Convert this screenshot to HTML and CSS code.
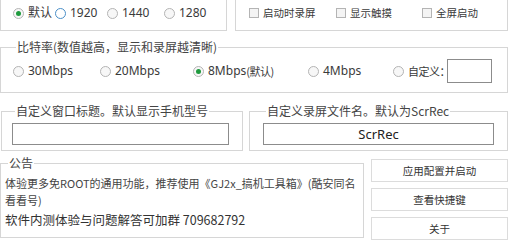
FILE: index.html
```html
<!DOCTYPE html>
<html lang="zh">
<head>
<meta charset="utf-8">
<link rel="stylesheet" href="styles.css">
</head>
<body>
<div class="page">
  <div class="row top">
    <fieldset class="box res">
      <div class="opts res-opts">
        <span class="opt"><span class="radio on"></span>默认</span>
        <span class="opt"><span class="radio hover"></span>1920</span>
        <span class="opt"><span class="radio"></span>1440</span>
        <span class="opt"><span class="radio"></span>1280</span>
      </div>
    </fieldset>
    <fieldset class="box flags">
      <div class="opts flag-opts">
        <span class="opt chk"><span class="check"></span>启动时录屏</span>
        <span class="opt chk"><span class="check"></span>显示触摸</span>
        <span class="opt chk"><span class="check"></span>全屏启动</span>
      </div>
    </fieldset>
  </div>

  <fieldset class="box bitrate">
    <legend>比特率(数值越高，显示和录屏越清晰)</legend>
    <div class="opts rate-opts">
      <span class="opt"><span class="radio"></span>30Mbps</span>
      <span class="opt"><span class="radio"></span>20Mbps</span>
      <span class="opt"><span class="radio on"></span>8Mbps<span class="cjk">(默认)</span></span>
      <span class="opt"><span class="radio"></span>4Mbps</span>
      <span class="opt"><span class="radio"></span><span class="cjk">自定义：</span><span class="field custom"></span></span>
    </div>
  </fieldset>

  <div class="row names">
    <fieldset class="box title">
      <legend>自定义窗口标题。默认显示手机型号</legend>
      <div class="field wide"></div>
    </fieldset>
    <fieldset class="box file">
      <legend>自定义录屏文件名。默认为ScrRec</legend>
      <div class="field wide">ScrRec</div>
    </fieldset>
  </div>

  <div class="row bottom">
    <fieldset class="box notice">
      <legend>公告</legend>
      <p class="small">体验更多免ROOT的通用功能，推荐使用《GJ2x_搞机工具箱》(酷安同名看看号)</p>
      <p class="big">软件内测体验与问题解答可加群 709682792</p>
    </fieldset>
    <div class="buttons">
      <div class="btn">应用配置并启动</div>
      <div class="btn">查看快捷键</div>
      <div class="btn">关于</div>
    </div>
  </div>
</div>
</body>
</html>
```

FILE: styles.css
```css
html, body {
  margin: 0;
  padding: 0;
  background: #ffffff;
}
body {
  width: 514px;
  height: 244px;
  overflow: hidden;
  font-family: "Segoe UI", "Noto Sans", "Noto Sans CJK SC", sans-serif;
  color: #3a3a3a;
}
.page {
  display: flex;
  flex-direction: column;
}
.row {
  display: flex;
  align-items: flex-start;
}
.box {
  margin: 0;
  padding: 0;
  border: 1px solid #d6d6d6;
  min-width: 0;
  box-sizing: border-box;
}
legend {
  font-family: "Noto Sans CJK SC", sans-serif;
  font-size: 12px;
  line-height: 16px;
  padding: 0 1px;
  margin-left: 3px;
  color: #444;
}
.opts {
  display: grid;
  align-items: center;
  font-size: 12px;
  line-height: 16px;
}
.opt {
  display: flex;
  align-items: center;
  white-space: nowrap;
  font-family: "Noto Sans", "Noto Sans CJK SC", sans-serif;
}
.cjk {
  font-family: "Noto Sans CJK SC", sans-serif;
  font-size: 11px;
  letter-spacing: -0.5px;
}
.radio {
  width: 11px;
  height: 11px;
  border: 1px solid #b4b4b4;
  border-radius: 50%;
  box-sizing: border-box;
  margin-right: 4px;
  background: #f7f7f7;
  display: flex;
  align-items: center;
  justify-content: center;
  flex: none;
}
.radio.hover {
  border-color: #4a8fc8;
  background: #fff;
}
.radio.on::after {
  content: "";
  width: 5px;
  height: 5px;
  border-radius: 50%;
  background: #1f9a3e;
}
.check {
  width: 10px;
  height: 10px;
  border: 1px solid #b4b4b4;
  background: #f4f4f4;
  box-sizing: border-box;
  margin-right: 4px;
  flex: none;
}
.chk {
  font-family: "Noto Sans CJK SC", sans-serif;
  font-size: 10.5px;
}

/* top row */
.top {
  margin-top: -10px;
  height: 41px;
}
.res {
  width: 227px;
  height: 41px;
  padding: 14px 0 0 12px;
}
.res-opts {
  grid-template-columns: 42px 52px 57px auto;
}
.flags {
  margin-left: 8px;
  width: 273px;
  height: 41px;
  padding: 14px 0 0 13px;
}
.flag-opts {
  grid-template-columns: 87px 86px auto;
}

/* bitrate */
.bitrate {
  margin-top: 8px;
  width: 508px;
  padding: 4px 0 9px 12px;
}
.rate-opts {
  grid-template-columns: 87px 93px 115px 85px auto;
}
.field {
  border: 1px solid #8c8c8c;
  box-sizing: border-box;
  background: #fff;
}
.custom {
  display: inline-block;
  width: 45px;
  height: 24px;
  margin-left: -3px;
}

/* names */
.names {
  margin-top: 10px;
}
.title {
  margin-left: 1px;
  width: 242px;
  padding: 4px 13px 5px 10px;
}
.file {
  margin-left: 6px;
  width: 259px;
  padding: 4px 13px 5px 13px;
}
.wide {
  height: 22px;
  font-family: "Noto Sans", sans-serif;
  font-size: 13px;
  line-height: 20px;
  text-align: center;
  color: #222;
}

/* bottom */
.bottom {
  margin-top: 4px;
}
.notice {
  width: 364px;
  height: 83px;
  padding: 4px 6px 0 4px;
}
.notice p {
  margin: 0;
  font-family: "Noto Sans CJK SC", sans-serif;
}
.small {
  font-size: 11px;
  line-height: 17px;
  color: #444;
}
.big {
  margin-top: 2px !important;
  font-size: 12.5px;
  line-height: 18px;
  color: #333;
}
.buttons {
  margin-left: 7px;
  margin-top: 4px;
  width: 137px;
  display: flex;
  flex-direction: column;
  gap: 6px;
}
.btn {
  height: 23px;
  border: 1px solid #dcdcdc;
  box-sizing: border-box;
  background: #fff;
  font-family: "Noto Sans CJK SC", sans-serif;
  font-size: 10.5px;
  line-height: 21px;
  text-align: center;
  color: #333;
}
```
